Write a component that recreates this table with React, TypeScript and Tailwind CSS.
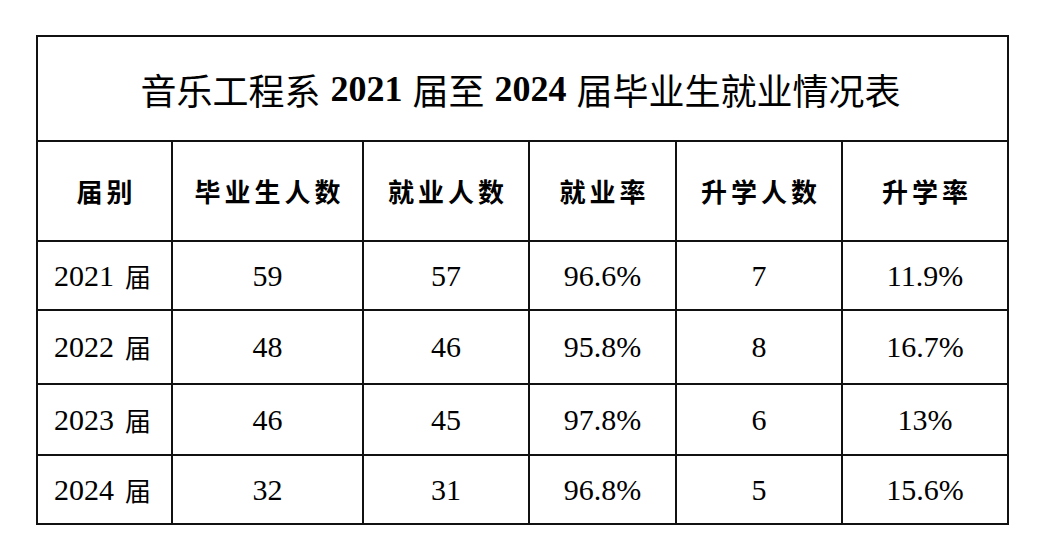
import React from "react";

const cjk = "font-['Liberation_Serif','Noto_Sans_CJK_SC',serif]";

const rows = [
  ["2021", "59", "57", "96.6%", "7", "11.9%"],
  ["2022", "48", "46", "95.8%", "8", "16.7%"],
  ["2023", "46", "45", "97.8%", "6", "13%"],
  ["2024", "32", "31", "96.8%", "5", "15.6%"],
];

const heights = ["h-[67px]", "h-[72px]", "h-[69px]", "h-[67px]"];

const headers = ["届别", "毕业生人数", "就业人数", "就业率", "升学人数", "升学率"];

export default function App() {
  return (
    <div className="w-[1039px] h-[556px] bg-white pt-[35px] pl-[36px]">
      <div
        className={`w-[973px] grid gap-[2px] bg-[#111] p-[2px] ${cjk} text-black`}
        style={{ gridTemplateColumns: "133px 189px 164px 145px 164px 164px" }}
      >
        <div className="col-span-6 bg-white h-[103px] flex items-center justify-center text-[36px] leading-none pr-[4px]">
          <span className="font-['Noto_Sans_CJK_SC',sans-serif]">音乐工程系</span>
          <span className="font-bold font-['Liberation_Serif',serif] mx-[10px]">2021</span>
          <span className="font-['Noto_Sans_CJK_SC',sans-serif]">届至</span>
          <span className="font-bold font-['Liberation_Serif',serif] mx-[10px]">2024</span>
          <span className="font-['Noto_Sans_CJK_SC',sans-serif]">届毕业生就业情况表</span>
        </div>
        {headers.map((h) => (
          <div
            key={h}
            className="bg-white h-[98px] flex items-center justify-center font-['Noto_Sans_CJK_SC',sans-serif] font-bold text-[26px] tracking-[4px] pl-[4px] leading-none"
          >
            {h}
          </div>
        ))}
        {rows.map((r, i) => (
          <React.Fragment key={r[0]}>
            <div
              className={`bg-white ${heights[i]} flex items-center justify-center text-[30px] leading-none font-['Liberation_Serif',serif] pr-[4px]`}
            >
              <span>{r[0]}</span>
              <span className="ml-[11px] text-[26px] font-['Noto_Sans_CJK_SC',sans-serif]">届</span>
            </div>
            {r.slice(1).map((c, j) => (
              <div
                key={j}
                className={`bg-white ${heights[i]} flex items-center justify-center text-[30px] leading-none font-['Liberation_Serif',serif]`}
              >
                {c}
              </div>
            ))}
          </React.Fragment>
        ))}
      </div>
    </div>
  );
}
